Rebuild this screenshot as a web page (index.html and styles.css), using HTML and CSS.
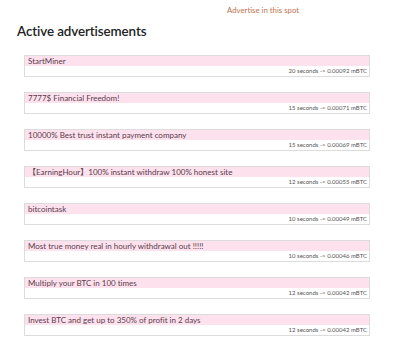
FILE: index.html
```html
<!DOCTYPE html>
<html>
<head>
<meta charset="utf-8">
<link rel="stylesheet" href="styles.css">
</head>
<body>
<div class="top"><a class="spot" href="#">Advertise in this spot</a></div>
<h1 class="title">Active advertisements</h1>
<div class="list">
  <div class="ad"><div class="ad-head">StartMiner</div><div class="ad-meta">20 seconds -&zwnj;&gt; 0.00092 mBTC</div></div>
  <div class="ad"><div class="ad-head">7777$ Financial Freedom!</div><div class="ad-meta">15 seconds -&zwnj;&gt; 0.00071 mBTC</div></div>
  <div class="ad"><div class="ad-head">10000% Best trust instant payment company</div><div class="ad-meta">15 seconds -&zwnj;&gt; 0.00069 mBTC</div></div>
  <div class="ad"><div class="ad-head">【EarningHour】100% instant withdraw 100% honest site</div><div class="ad-meta">12 seconds -&zwnj;&gt; 0.00055 mBTC</div></div>
  <div class="ad"><div class="ad-head">bitcointask</div><div class="ad-meta">10 seconds -&zwnj;&gt; 0.00049 mBTC</div></div>
  <div class="ad"><div class="ad-head">Most true money real in hourly withdrawal out !!!!!</div><div class="ad-meta">10 seconds -&zwnj;&gt; 0.00046 mBTC</div></div>
  <div class="ad"><div class="ad-head">Multiply your BTC in 100 times</div><div class="ad-meta">12 seconds -&zwnj;&gt; 0.00042 mBTC</div></div>
  <div class="ad"><div class="ad-head">Invest BTC and get up to 350% of profit in 2 days</div><div class="ad-meta">12 seconds -&zwnj;&gt; 0.00042 mBTC</div></div>
</div>
</body>
</html>
```
FILE: styles.css
```css
html, body {
  margin: 0;
  padding: 0;
  background: #fff;
  font-family: "Lato", "Noto Sans CJK SC", sans-serif;
  font-variant-ligatures: none;
  font-feature-settings: "liga" 0, "dlig" 0, "calt" 0;
}
.top {
  height: 20px;
  padding-left: 227px;
  box-sizing: border-box;
  padding-top: 5px;
}
.spot {
  display: block;
  color: #c0734f;
  text-decoration: none;
  font-size: 7.8px;
  line-height: 10px;
}
.title {
  margin: 0 0 0 17px;
  font-size: 13.4px;
  font-weight: 600;
  letter-spacing: -0.1px;
  color: #222;
  line-height: 22px;
  height: 35px;
}
.list {
  display: flex;
  flex-direction: column;
  gap: 15px;
  margin-left: 24px;
  width: 346px;
}
.ad {
  border: 1px solid #dcdcdc;
  height: 22px;
  box-sizing: border-box;
  background: #fff;
}
.ad-head {
  background: #fde2ee;
  height: 10px;
  font-size: 8px;
  line-height: 10px;
  color: #5a3b4a;
  padding-left: 3px;
  white-space: nowrap;
}
.ad-meta {
  text-align: right;
  font-size: 6px;
  line-height: 10px;
  color: #555;
  padding-right: 2px;
}
```
